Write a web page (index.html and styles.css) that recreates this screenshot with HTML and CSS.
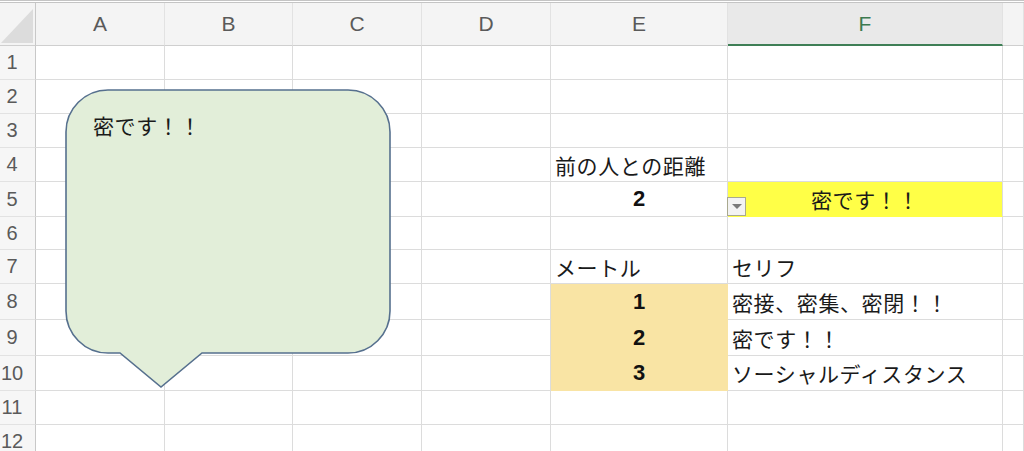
FILE: index.html
```html
<!DOCTYPE html>
<html lang="ja">
<head>
    <meta charset="UTF-8">
    <title>距離と台詞</title>
    <link rel="stylesheet" href="styles.css">
</head>
<body>
    <div class="sheet">
        <div class="row head">
            <div class="corner"><span class="tri"></span></div>
            <div class="col">A</div>
            <div class="col">B</div>
            <div class="col">C</div>
            <div class="col">D</div>
            <div class="col">E</div>
            <div class="col sel">F</div>
            <div class="col"></div>
        </div>
        <div class="row h34"><div class="num">1</div><div></div><div></div><div></div><div></div><div></div><div></div><div></div></div>
        <div class="row h34"><div class="num">2</div><div></div><div></div><div></div><div></div><div></div><div></div><div></div></div>
        <div class="row h34"><div class="num">3</div><div></div><div></div><div></div><div></div><div></div><div></div><div></div></div>
        <div class="row h34"><div class="num">4</div><div></div><div></div><div></div><div></div><div class="txt">前の人との距離</div><div></div><div></div></div>
        <div class="row h35"><div class="num">5</div><div></div><div></div><div></div><div></div><div class="val">2</div><div class="txt center hit">密です！！<span class="drop"></span></div><div></div></div>
        <div class="row h33"><div class="num">6</div><div></div><div></div><div></div><div></div><div></div><div></div><div></div></div>
        <div class="row h34"><div class="num">7</div><div></div><div></div><div></div><div></div><div class="txt">メートル</div><div class="txt">セリフ</div><div></div></div>
        <div class="row h36"><div class="num">8</div><div></div><div></div><div></div><div></div><div class="val key">1</div><div class="txt">密接、密集、密閉！！</div><div></div></div>
        <div class="row h36"><div class="num">9</div><div></div><div></div><div></div><div></div><div class="val key">2</div><div class="txt">密です！！</div><div></div></div>
        <div class="row h35"><div class="num">10</div><div></div><div></div><div></div><div></div><div class="val key">3</div><div class="txt">ソーシャルディスタンス</div><div></div></div>
        <div class="row h34"><div class="num">11</div><div></div><div></div><div></div><div></div><div></div><div></div><div></div></div>
        <div class="row h34"><div class="num">12</div><div></div><div></div><div></div><div></div><div></div><div></div><div></div></div>

        <!-- 吹き出し -->
        <div class="callout">
            <svg width="330" height="304" viewBox="0 0 330 304">
                <path d="M44 2 H284 A42 42 0 0 1 326 44 V223 A42 42 0 0 1 284 265 H138 L97 299 L56 265 H44 A42 42 0 0 1 2 223 V44 A42 42 0 0 1 44 2 Z" fill="#e2eed9" stroke="#56708e" stroke-width="1.6"/>
            </svg>
            <div class="callout-text">密です！！</div>
        </div>
    </div>
</body>
</html>
```

FILE: styles.css
```css
body {
    margin: 0;
    background: white;
    font-family: "Noto Sans CJK JP", sans-serif;
    overflow: hidden;
}
.sheet {
    position: relative;
    width: 1024px;
    height: 451px;
    border-top: 3px double #c4c4c4;
    box-sizing: border-box;
    overflow: hidden;
}
.row {
    display: grid;
    grid-template-columns: 36px 129px 128px 129px 129px 177px 275px 1fr;
}
.row > div {
    box-sizing: border-box;
    border-right: 1px solid #dcdcdc;
    border-bottom: 1px solid #dcdcdc;
    position: relative;
}
.h33 { height: 33px; }
.h34 { height: 34px; }
.h35 { height: 35px; }
.h36 { height: 36px; }

/* 見出し */
.head {
    height: 43px;
}
.head > div {
    background: #f4f4f4;
    border-bottom-color: #cfcfcf;
    border-right-color: #e2e2e2;
}
.corner {
    border-right-color: #c8c8c8 !important;
}
.tri {
    position: absolute;
    right: 2px;
    bottom: 2px;
    width: 0;
    height: 0;
    border-left: 32px solid transparent;
    border-bottom: 34px solid #dcdcdc;
}
.col {
    display: flex;
    align-items: center;
    justify-content: center;
    font-family: "Liberation Sans", sans-serif;
    font-size: 21px;
    color: #5a5a5a;
}
.col.sel {
    background: #e9e9e9 !important;
    color: #3c7a50;
    border-bottom: 2px solid #3f7f56 !important;
}
.row > .num {
    background: #f6f6f6;
    border-right-color: #c8c8c8;
    border-bottom-color: #e2e2e2;
    display: flex;
    align-items: center;
    justify-content: center;
    padding-right: 11px;
    font-family: "Liberation Sans", sans-serif;
    font-size: 20px;
    color: #5a5a5a;
}

/* セル */
.txt {
    display: flex;
    align-items: center;
    padding-left: 4px;
    font-size: 21px;
    color: #1a1a1a;
    white-space: nowrap;
    letter-spacing: 0.6px;
}
.txt.center {
    justify-content: center;
    padding-left: 0;
}
.val {
    display: flex;
    align-items: center;
    justify-content: center;
    font-family: "Liberation Sans", sans-serif;
    font-weight: bold;
    font-size: 22px;
    color: #111;
}
.key {
    background: #f9e4a4;
    border-right-color: #f9e4a4 !important;
    border-bottom-color: #f9e4a4 !important;
}
.hit {
    background: #ffff47;
    border-bottom-color: #ffff47 !important;
}
.drop {
    position: absolute;
    left: -1px;
    bottom: 0;
    width: 19px;
    height: 19px;
    box-sizing: border-box;
    border: 1px solid #a9a98f;
    background: #f3f3f3;
}
.drop::after {
    content: "";
    position: absolute;
    left: 4px;
    top: 6px;
    border-left: 5px solid transparent;
    border-right: 5px solid transparent;
    border-top: 5px solid #7a7a7a;
}

/* 吹き出し */
.callout {
    position: absolute;
    left: 64px;
    top: 85px;
    width: 330px;
    height: 304px;
}
.callout svg {
    display: block;
}
.callout-text {
    position: absolute;
    left: 29px;
    top: 27px;
    font-size: 21px;
    line-height: 1;
    letter-spacing: 0.6px;
    color: #1a1a1a;
}
```
